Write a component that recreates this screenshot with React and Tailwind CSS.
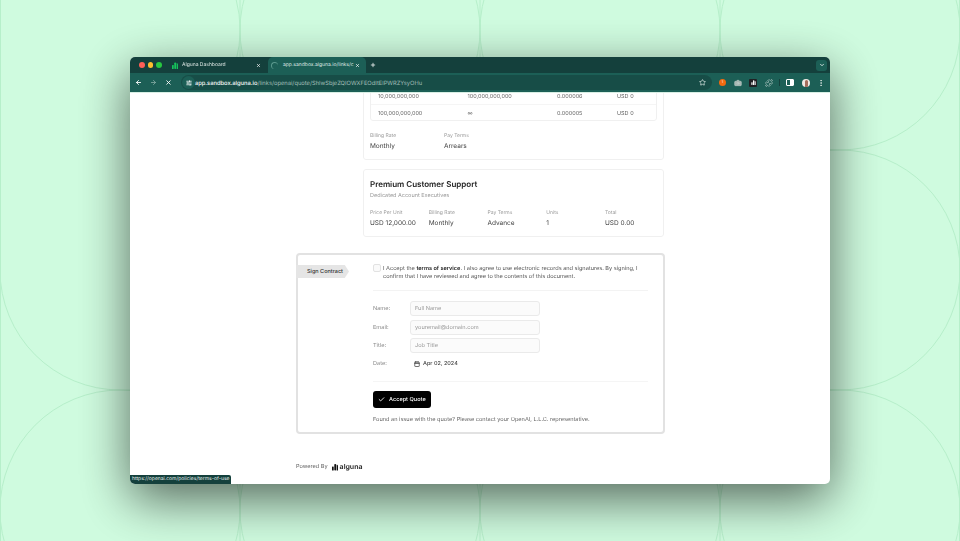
import { ArrowLeft, ArrowRight, X, Plus, Star, ChevronDown, SlidersHorizontal, Puzzle, EllipsisVertical, Check, Calendar, Camera } from 'lucide-react';

const font = { fontFamily: 'Inter, "Liberation Sans", sans-serif' };

// wallpaper pattern: rows of circles on a 240px grid, the top left corner is left bare
function Wallpaper() {
  const circles = [
    [360, 30], [600, 30], [840, 30],
    [360, 270], [600, 270], [840, 270],
    [120, 510], [360, 510], [600, 510], [840, 510],
  ];
  return (
    <svg className="absolute inset-0" width="960" height="541" viewBox="0 0 960 541" fill="none">
      {circles.map(([x, y]) => (
        <circle key={`${x}-${y}`} cx={x} cy={y} r="120" stroke="#b6efca" strokeWidth="1" />
      ))}
      <path d="M236 -1A120 120 0 0 1 236 61" stroke="#b6efca" strokeWidth="1" />
      <path d="M0 270A120 120 0 0 0 120 390H240" stroke="#b6efca" strokeWidth="1" />
      {[0.5, 240, 480, 720, 959.5].map((x) => (
        <line key={x} x1={x} y1="0" x2={x} y2="541" stroke="#b6efca" strokeWidth="1" />
      ))}
    </svg>
  );
}

function AlgunaMark({ className, color }) {
  return (
    <svg className={className} viewBox="0 0 12 14" fill={color}>
      <rect x="0" y="6" width="3.4" height="8" rx="1.2" />
      <rect x="4.6" y="1" width="3.6" height="13" rx="1.4" />
      <path d="M9.3 2.5c1.6 0 2.7 1 2.7 2.6V14H9.3z" />
    </svg>
  );
}

function Tabs() {
  return (
    <div className="flex h-4 shrink-0 items-center bg-[#14403c]">
      <div className="ml-[9px] flex w-[26px] gap-[3px]">
        <span className="h-[5.5px] w-[5.5px] rounded-full bg-[#ff5f57]" />
        <span className="h-[5.5px] w-[5.5px] rounded-full bg-[#febc2e]" />
        <span className="h-[5.5px] w-[5.5px] rounded-full bg-[#28c840]" />
      </div>
      <div className="ml-[7px] flex w-[91px] items-center">
        <AlgunaMark className="h-[7px] w-[6px]" color="#16c45c" />
        <span className="ml-1 w-[74px] pt-[2px] text-[5px] text-[#dfe8e5]">Alguna Dashboard</span>
        <X className="h-[5px] w-[5px] text-white" strokeWidth={3} />
      </div>
      <div className="ml-[5px] flex h-4 w-[98px] items-center rounded-t-[5px] bg-[#1c5f56] pl-[2px]">
        <span className="ml-[1px] h-[7px] w-[7px] rounded-full border-t border-l border-[#5c9a8e]" />
        <span className="ml-[5px] w-[69px] pt-[2px] text-[5px] whitespace-nowrap text-[#dfe8e5]">app.sandbox.alguna.io/links/c</span>
        <X className="ml-[3px] h-[5px] w-[5px] text-white" strokeWidth={3} />
      </div>
      <Plus className="ml-[4px] h-[6px] w-[6px] text-white" strokeWidth={3} />
      <div className="mr-[3px] ml-auto flex h-[11px] w-[11px] items-center justify-center rounded-[3px] bg-[#1c5f56]">
        <ChevronDown className="h-[6px] w-[6px] text-white" strokeWidth={3} />
      </div>
    </div>
  );
}

function Toolbar() {
  return (
    <div className="flex h-5 shrink-0 items-center border-b border-[#d8efe4] bg-[#1c5f56]">
      <ArrowLeft className="ml-[5px] h-[7px] w-[7px] text-white" strokeWidth={3} />
      <ArrowRight className="ml-2 h-[7px] w-[7px] text-[#7fa79f]" strokeWidth={3} />
      <X className="ml-2 h-[7px] w-[7px] text-white" strokeWidth={3} />
      <div className="ml-[9px] flex h-[15px] w-[531px] items-center rounded-full bg-[#174d47]">
        <span className="ml-[1px] flex h-[13px] w-[13px] items-center justify-center rounded-full bg-[#1c5f56]">
          <SlidersHorizontal className="h-[6px] w-[6px] text-white" strokeWidth={3} />
        </span>
        <span className="pt-[3px] text-[5.75px] font-medium whitespace-nowrap text-white">
          app.sandbox.alguna.io<span className="font-normal text-[#a3bfb9]">/links/openai/quote/ShlwSbjeZQIOWXFEOdItElPWRZYsyOHu</span>
        </span>
        <Star className="mr-[6px] ml-auto h-[7px] w-[7px] text-[#e3ece9]" strokeWidth={2.4} />
      </div>
      <span className="ml-[7px] flex h-[7px] w-[7px] items-center justify-center rounded-full bg-[#f26a0f] text-[3.5px] text-white">1</span>
      <Camera className="ml-2 h-2 w-2 text-[#c9d6d3]" fill="#a5b5b1" strokeWidth={1.5} />
      <span className="ml-[7px] flex h-2 w-2 items-center justify-center rounded-[1px] bg-[#202124]">
        <AlgunaMark className="h-[5px] w-[5px]" color="#ffffff" />
      </span>
      <Puzzle className="ml-[8px] h-2 w-2 text-[#e6efec]" strokeWidth={1.5} />
      <span className="ml-[6px] h-[7px] w-px bg-[#14403c]" />
      <span className="ml-[6px] flex h-[7px] w-2 overflow-hidden rounded-[1px] border border-white">
        <span className="w-1/2" />
        <span className="w-1/2 bg-white" />
      </span>
      <span className="relative ml-[8px] flex h-2 w-2 justify-center overflow-hidden rounded-full bg-[#f1e9e4]">
        <span className="mt-[1px] h-[7px] w-[3px] rounded-t-full bg-[#a56d5c]" />
      </span>
      <EllipsisVertical className="ml-[7px] h-2 w-2 text-[#d4dfdc]" strokeWidth={2.6} />
    </div>
  );
}

function Field({ label, value, className = '' }) {
  return (
    <div className={className}>
      <div className="text-[5px] leading-[8px] text-[#9a9a9a]">{label}</div>
      <div className="mt-[1px] text-[6.5px] leading-[10px] text-[#444444]">{value}</div>
    </div>
  );
}

function TierRow({ from, to, rate, border }) {
  return (
    <div className={`flex h-4 items-center pt-[2px] pl-[7px] text-[5.5px] text-[#666666] ${border ? 'border-b border-[#f5f5f5]' : ''}`}>
      <span className="w-[89.5px]">{from}</span>
      <span className="w-[89.5px]">{to}</span>
      <span className="w-[60px]">{rate}</span>
      <span>USD 0</span>
    </div>
  );
}

function FormRow({ label, placeholder }) {
  return (
    <div className="flex items-center">
      <span className="w-[37px] pt-[2px] text-[5.6px] text-[#8a8a8a]">{label}</span>
      <div className="flex h-[15px] w-[130px] items-center rounded-[3px] border border-[#eaeaea] bg-[#fbfbfb] pt-[2px] pl-[4px] text-[5.6px] text-[#9a9a9a]">
        {placeholder}
      </div>
    </div>
  );
}

function SignBox() {
  return (
    <div className="mt-4 ml-[166px] flex h-[181px] w-[369px] rounded-[4px] border-2 border-[#e2e2e2] bg-white">
      <div className="w-[75px] shrink-0 pt-[10px]">
        <div className="-ml-[2px] flex h-[13px] w-[53px] items-center bg-[#e5e5e5] pt-[2px] pl-[11px] text-[5.5px] font-medium text-[#333333] [clip-path:polygon(0_0,92%_0,100%_50%,92%_100%,0_100%)]">
          Sign Contract
        </div>
      </div>
      <div className="w-[275px] pt-[9px]">
        <div className="flex border-b border-[#f3f3f3] pb-[9px]">
          <span className="h-2 w-2 shrink-0 rounded-[2px] border border-[#e2e2e2] bg-[#fafafa]" />
          <p className="mt-[1px] ml-[2px] text-[5.6px] leading-[8px] text-[#555555]">
            I Accept the <b className="font-semibold text-[#222222]">terms of service.</b> I also agree to use electronic records and signatures. By signing, I confirm that I have reviewed and agree to the contents of this document.
          </p>
        </div>
        <div className="mt-[10px] flex flex-col gap-[3.5px]">
          <FormRow label="Name:" placeholder="Full Name" />
          <FormRow label="Email:" placeholder="youremail@domain.com" />
          <FormRow label="Title:" placeholder="Job Title" />
        </div>
        <div className="mt-[6px] flex h-[10px] items-center">
          <span className="w-[41px] text-[5.6px] text-[#8a8a8a]">Date:</span>
          <Calendar className="h-[6px] w-[6px] text-[#444444]" strokeWidth={3} />
          <span className="ml-[3px] text-[5.5px] font-medium text-[#444444]">Apr 02, 2024</span>
        </div>
        <div className="mt-[12px] border-b border-[#f5f5f5]" />
        <div className="mt-[9px] flex h-[17px] w-[58px] items-center rounded-[3px] bg-black pl-[5px] text-white">
          <Check className="h-[7px] w-[7px]" strokeWidth={3} />
          <span className="ml-[4px] pt-[2px] text-[5.6px] font-medium">Accept Quote</span>
        </div>
        <p className="mt-[8px] text-[5.6px] leading-[8px] text-[#666666]">Found an issue with the quote? Please contact your OpenAI, L.L.C. representative.</p>
      </div>
    </div>
  );
}

export default function App() {
  return (
    <div className="relative h-[541px] w-[960px] overflow-hidden bg-[#cffbdf] [text-rendering:geometricPrecision]" style={font}>
      <Wallpaper />
      <div className="relative mt-[57px] ml-[130px] flex h-[427px] w-[700px] flex-col overflow-hidden rounded-[5px] bg-white opacity-[0.999] shadow-[0_15px_50px_rgba(0,0,0,0.6)]">
        <Tabs />
        <Toolbar />
        <div className="flex-1 overflow-hidden">
          {/* first card is scrolled past its top edge */}
          <div className="-mt-[40px] ml-[233px] h-[107px] w-[301px] rounded-[3px] border border-[#f0f0f0] px-[6px]">
            <div className="mt-[3px] h-[64px] w-[287px] rounded-[3px] border border-[#f0f0f0] pt-[31px]">
              <TierRow from="10,000,000,000" to="100,000,000,000" rate="0.000006" border />
              <TierRow from="100,000,000,000" to="∞" rate="0.000005" />
            </div>
            <div className="mt-[11px] flex">
              <Field label="Billing Rate" value="Monthly" className="w-[74px]" />
              <Field label="Pay Terms" value="Arrears" />
            </div>
          </div>
          <div className="mt-[9px] ml-[233px] h-[68px] w-[301px] rounded-[3px] border border-[#f0f0f0] px-[6px] pt-[8px]">
            <h3 className="text-[8px] leading-[12px] font-semibold text-[#222222]">Premium Customer Support</h3>
            <p className="mt-[2px] text-[5.5px] leading-[8px] text-[#9a9a9a]">Dedicated Account Executives</p>
            <div className="mt-[9px] flex">
              <Field label="Price Per Unit" value="USD 12,000.00" className="w-[58.75px]" />
              <Field label="Billing Rate" value="Monthly" className="w-[58.75px]" />
              <Field label="Pay Terms" value="Advance" className="w-[58.75px]" />
              <Field label="Units" value="1" className="w-[58.75px]" />
              <Field label="Total" value="USD 0.00" />
            </div>
          </div>
          <SignBox />
          <div className="mt-[28px] ml-[166px] flex items-center">
            <span className="text-[5.6px] text-[#666666]">Powered By</span>
            <AlgunaMark className="ml-[4px] h-2 w-[6px]" color="#111111" />
            <span className="ml-[2px] text-[7px] font-semibold text-[#222222]">alguna</span>
          </div>
        </div>
        <div className="absolute bottom-0 left-0 flex h-[9px] w-[101px] items-center rounded-tr-[2px] bg-[#14403c] pl-[2px] text-[5px] whitespace-nowrap text-[#e5efec]">
          https://openai.com/policies/terms-of-use
        </div>
      </div>
    </div>
  );
}
